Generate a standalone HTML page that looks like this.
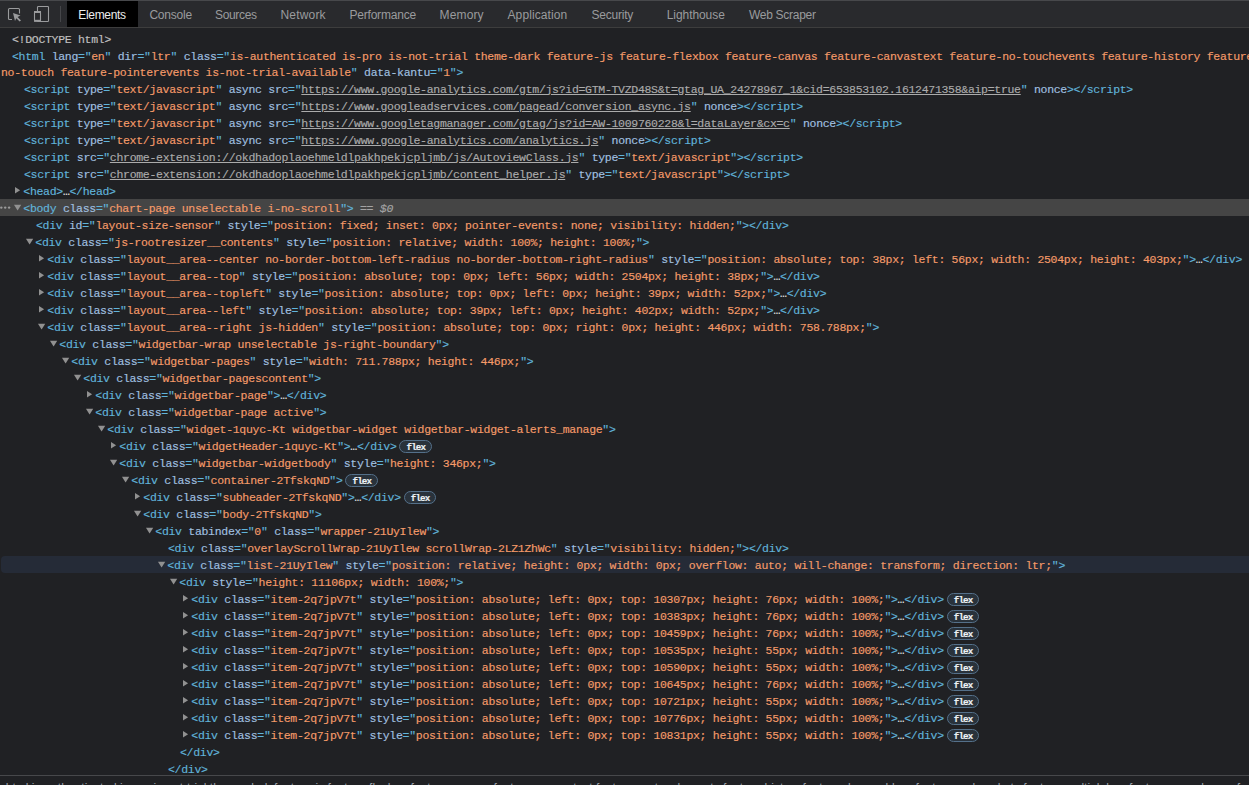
<!DOCTYPE html>
<html lang="en"><head><meta charset="utf-8"><title>DevTools</title>
<style>
html,body{margin:0;padding:0;background:#202124;}
body{width:1249px;height:785px;overflow:hidden;position:relative;font-family:"Liberation Sans",sans-serif;}
#tb{position:absolute;left:0;top:0;width:1249px;height:28px;background:#292a2d;box-sizing:border-box;border-top:1px solid #47484b;border-bottom:1px solid #3d3d3d;}
#tb .sel{position:absolute;left:67px;top:0;width:71px;height:26px;background:#000;}
#tb .tab{position:absolute;top:1px;height:26px;line-height:27px;font-size:12px;color:#9a9b9d;white-space:nowrap;}
#tb .tab.on{color:#eceded;}
#tb .div{position:absolute;left:60px;top:5px;width:1px;height:16px;background:#454649;}
#tb svg{position:absolute;left:0;top:0;}
#tree{position:absolute;left:0;top:28px;width:1249px;height:747px;overflow:hidden;font-family:"Liberation Mono","DejaVu Sans Mono",monospace;font-size:11.5px;letter-spacing:-0.301px;color:#d5d5d5;-webkit-text-stroke:0.15px;}
.row{position:absolute;left:0;height:16px;line-height:16px;white-space:pre;}
.row.wrap{white-space:pre;}
.bg{position:absolute;left:0;width:1249px;height:17px;}
.bg.sel{background:#454545;}
.bg.hov{background:#252b37;left:1px;border-radius:4px 0 0 4px;}
.t{color:#61b4db}.n{color:#a1c0e0}.v{color:#f59b69}.l{color:#ababab;text-decoration:underline;text-underline-offset:1px}.g{color:#c0c0c0}.e{color:#e6e6e6}
.eq{color:#a3a3a3;font-style:italic}
.fx{display:inline-block;font-family:"Liberation Mono",monospace;font-size:9.2px;font-weight:bold;letter-spacing:-0.85px;line-height:12px;height:11px;padding:0 6.2px 0 5.7px;margin-left:2.9px;border:1px solid #54708a;border-radius:7px;background:#29323b;color:#eef2f6;vertical-align:0px;position:relative;top:-1px}
.fx b{position:relative;top:1px;left:0.4px}
.ar{position:absolute;}
#cr{position:absolute;left:0;top:775px;width:1249px;height:10px;border-top:1px solid #47484b;box-sizing:border-box;background:#202124;overflow:hidden;}
#cr div{position:absolute;left:5.7px;letter-spacing:0.017px;top:4.4px;white-space:nowrap;font-size:12px;line-height:16px;color:#9aa0a8;}
</style></head><body>
<div id="tb"><div class="sel"></div><svg width="66" height="27" viewBox="0 0 66 27">
<path d="M19.5 12.5 V8.5 Q19.5 7.5 18.5 7.5 H9.5 Q8.5 7.5 8.5 8.5 V17.5 Q8.5 18.5 9.5 18.5 H12" fill="none" stroke="#9a9b9d" stroke-width="1.1"/>
<path d="M13 12 L20.5 14.6 L17.6 15.9 L21 19.4 L19.6 20.6 L16.3 17.2 L15 20 Z" fill="#9a9b9d"/>
<rect x="37.5" y="5.5" width="11" height="15" rx="0.8" fill="none" stroke="#9a9b9d" stroke-width="1.1"/>
<rect x="34.5" y="10.5" width="6" height="9.5" rx="0.8" fill="#292a2d" stroke="#9a9b9d" stroke-width="1.1"/>
<rect x="34" y="10" width="7" height="2" fill="#9a9b9d"/><rect x="34" y="18.8" width="7" height="2" fill="#9a9b9d"/>
</svg><div class="div"></div><div class="tab on" style="left:78.3px;letter-spacing:-0.316px">Elements</div><div class="tab" style="left:149.4px;letter-spacing:-0.204px">Console</div><div class="tab" style="left:215.1px;letter-spacing:-0.362px">Sources</div><div class="tab" style="left:280.5px;letter-spacing:0.183px">Network</div><div class="tab" style="left:349.4px;letter-spacing:-0.191px">Performance</div><div class="tab" style="left:439.6px;letter-spacing:0.126px">Memory</div><div class="tab" style="left:507.5px;letter-spacing:0.107px">Application</div><div class="tab" style="left:591.4px;letter-spacing:-0.207px">Security</div><div class="tab" style="left:666.7px;letter-spacing:-0.062px">Lighthouse</div><div class="tab" style="left:749.0px;letter-spacing:-0.292px">Web Scraper</div></div>
<div id="tree">
<div class="row" style="left:12.0px;top:3.5px"><span class="g">&lt;!DOCTYPE html&gt;</span></div>
<div class="row" style="left:12.0px;top:20.5px"><span class="t">&lt;html</span> <span class="n">lang</span><span class="t">="</span><span class="v">en</span><span class="t">"</span> <span class="n">dir</span><span class="t">="</span><span class="v">ltr</span><span class="t">"</span> <span class="n">class</span><span class="t">="</span><span class="v">is-authenticated is-pro is-not-trial theme-dark feature-js feature-flexbox feature-canvas feature-canvastext feature-no-touchevents feature-history feature-</span></div><div class="row" style="left:1.0px;top:36.5px"><span class="v">no-touch feature-pointerevents is-not-trial-available</span><span class="t">"</span> <span class="n">data-kantu</span><span class="t">="</span><span class="v">1</span><span class="t">"</span><span class="t">&gt;</span></div>
<div class="row" style="left:24.0px;top:53.5px"><span class="t">&lt;script</span> <span class="n">type</span><span class="t">="</span><span class="v">text/javascript</span><span class="t">"</span> <span class="n">async</span> <span class="n">src</span><span class="t">="</span><span class="l">https://www.google-analytics.com/gtm/js?id=GTM-TVZD48S&amp;t=gtag_UA_24278967_1&amp;cid=653853102.1612471358&amp;aip=true</span><span class="t">"</span> <span class="n">nonce</span><span class="t">&gt;</span><span class="t">&lt;/script&gt;</span></div>
<div class="row" style="left:24.0px;top:70.5px"><span class="t">&lt;script</span> <span class="n">type</span><span class="t">="</span><span class="v">text/javascript</span><span class="t">"</span> <span class="n">async</span> <span class="n">src</span><span class="t">="</span><span class="l">https://www.googleadservices.com/pagead/conversion_async.js</span><span class="t">"</span> <span class="n">nonce</span><span class="t">&gt;</span><span class="t">&lt;/script&gt;</span></div>
<div class="row" style="left:24.0px;top:87.5px"><span class="t">&lt;script</span> <span class="n">type</span><span class="t">="</span><span class="v">text/javascript</span><span class="t">"</span> <span class="n">async</span> <span class="n">src</span><span class="t">="</span><span class="l">https://www.googletagmanager.com/gtag/js?id=AW-1009760228&amp;l=dataLayer&amp;cx=c</span><span class="t">"</span> <span class="n">nonce</span><span class="t">&gt;</span><span class="t">&lt;/script&gt;</span></div>
<div class="row" style="left:24.0px;top:104.5px"><span class="t">&lt;script</span> <span class="n">type</span><span class="t">="</span><span class="v">text/javascript</span><span class="t">"</span> <span class="n">async</span> <span class="n">src</span><span class="t">="</span><span class="l">https://www.google-analytics.com/analytics.js</span><span class="t">"</span> <span class="n">nonce</span><span class="t">&gt;</span><span class="t">&lt;/script&gt;</span></div>
<div class="row" style="left:24.0px;top:121.5px"><span class="t">&lt;script</span> <span class="n">src</span><span class="t">="</span><span class="l">chrome-extension://okdhadoplaoehmeldlpakhpekjcpljmb/js/AutoviewClass.js</span><span class="t">"</span> <span class="n">type</span><span class="t">="</span><span class="v">text/javascript</span><span class="t">"</span><span class="t">&gt;</span><span class="t">&lt;/script&gt;</span></div>
<div class="row" style="left:24.0px;top:138.5px"><span class="t">&lt;script</span> <span class="n">src</span><span class="t">="</span><span class="l">chrome-extension://okdhadoplaoehmeldlpakhpekjcpljmb/content_helper.js</span><span class="t">"</span> <span class="n">type</span><span class="t">="</span><span class="v">text/javascript</span><span class="t">"</span><span class="t">&gt;</span><span class="t">&lt;/script&gt;</span></div>
<svg class="ar" style="left:14.0px;top:154px" width="10" height="17"><path d="M1 5 V11.6 L6.1 8.3 Z" fill="#919191"/></svg><div class="row" style="left:23.3px;top:155.5px"><span class="t">&lt;head&gt;</span><span class="e">…</span><span class="t">&lt;/head&gt;</span></div>
<div class="bg sel" style="top:171px"></div><svg class="ar" style="left:0;top:171px" width="11" height="17"><circle cx="1.3" cy="8.6" r="1.2" fill="#9a9a9a"/><circle cx="5.2" cy="8.6" r="1.2" fill="#9a9a9a"/><circle cx="9.1" cy="8.6" r="1.2" fill="#9a9a9a"/></svg><svg class="ar" style="left:14.0px;top:171px" width="10" height="17"><path d="M0 5.8 H7.2 L3.6 11.6 Z" fill="#919191"/></svg><div class="row" style="left:23.3px;top:172.5px"><span class="t">&lt;body</span> <span class="n">class</span><span class="t">="</span><span class="v">chart-page unselectable i-no-scroll</span><span class="t">"</span><span class="t">&gt;</span><span class="eq"> == $0</span></div>
<div class="row" style="left:36.0px;top:189.5px"><span class="t">&lt;div</span> <span class="n">id</span><span class="t">="</span><span class="v">layout-size-sensor</span><span class="t">"</span> <span class="n">style</span><span class="t">="</span><span class="v">position: fixed; inset: 0px; pointer-events: none; visibility: hidden;</span><span class="t">"</span><span class="t">&gt;</span><span class="t">&lt;/div&gt;</span></div>
<svg class="ar" style="left:26.0px;top:205px" width="10" height="17"><path d="M0 5.8 H7.2 L3.6 11.6 Z" fill="#919191"/></svg><div class="row" style="left:35.3px;top:206.5px"><span class="t">&lt;div</span> <span class="n">class</span><span class="t">="</span><span class="v">js-rootresizer__contents</span><span class="t">"</span> <span class="n">style</span><span class="t">="</span><span class="v">position: relative; width: 100%; height: 100%;</span><span class="t">"</span><span class="t">&gt;</span></div>
<svg class="ar" style="left:38.0px;top:222px" width="10" height="17"><path d="M1 5 V11.6 L6.1 8.3 Z" fill="#919191"/></svg><div class="row" style="left:47.3px;top:223.5px"><span class="t">&lt;div</span> <span class="n">class</span><span class="t">="</span><span class="v">layout__area--center no-border-bottom-left-radius no-border-bottom-right-radius</span><span class="t">"</span> <span class="n">style</span><span class="t">="</span><span class="v">position: absolute; top: 38px; left: 56px; width: 2504px; height: 403px;</span><span class="t">"</span><span class="t">&gt;</span><span class="e">…</span><span class="t">&lt;/div&gt;</span></div>
<svg class="ar" style="left:38.0px;top:239px" width="10" height="17"><path d="M1 5 V11.6 L6.1 8.3 Z" fill="#919191"/></svg><div class="row" style="left:47.3px;top:240.5px"><span class="t">&lt;div</span> <span class="n">class</span><span class="t">="</span><span class="v">layout__area--top</span><span class="t">"</span> <span class="n">style</span><span class="t">="</span><span class="v">position: absolute; top: 0px; left: 56px; width: 2504px; height: 38px;</span><span class="t">"</span><span class="t">&gt;</span><span class="e">…</span><span class="t">&lt;/div&gt;</span></div>
<svg class="ar" style="left:38.0px;top:256px" width="10" height="17"><path d="M1 5 V11.6 L6.1 8.3 Z" fill="#919191"/></svg><div class="row" style="left:47.3px;top:257.5px"><span class="t">&lt;div</span> <span class="n">class</span><span class="t">="</span><span class="v">layout__area--topleft</span><span class="t">"</span> <span class="n">style</span><span class="t">="</span><span class="v">position: absolute; top: 0px; left: 0px; height: 39px; width: 52px;</span><span class="t">"</span><span class="t">&gt;</span><span class="e">…</span><span class="t">&lt;/div&gt;</span></div>
<svg class="ar" style="left:38.0px;top:273px" width="10" height="17"><path d="M1 5 V11.6 L6.1 8.3 Z" fill="#919191"/></svg><div class="row" style="left:47.3px;top:274.5px"><span class="t">&lt;div</span> <span class="n">class</span><span class="t">="</span><span class="v">layout__area--left</span><span class="t">"</span> <span class="n">style</span><span class="t">="</span><span class="v">position: absolute; top: 39px; left: 0px; height: 402px; width: 52px;</span><span class="t">"</span><span class="t">&gt;</span><span class="e">…</span><span class="t">&lt;/div&gt;</span></div>
<svg class="ar" style="left:38.0px;top:290px" width="10" height="17"><path d="M0 5.8 H7.2 L3.6 11.6 Z" fill="#919191"/></svg><div class="row" style="left:47.3px;top:291.5px"><span class="t">&lt;div</span> <span class="n">class</span><span class="t">="</span><span class="v">layout__area--right js-hidden</span><span class="t">"</span> <span class="n">style</span><span class="t">="</span><span class="v">position: absolute; top: 0px; right: 0px; height: 446px; width: 758.788px;</span><span class="t">"</span><span class="t">&gt;</span></div>
<svg class="ar" style="left:50.0px;top:307px" width="10" height="17"><path d="M0 5.8 H7.2 L3.6 11.6 Z" fill="#919191"/></svg><div class="row" style="left:59.3px;top:308.5px"><span class="t">&lt;div</span> <span class="n">class</span><span class="t">="</span><span class="v">widgetbar-wrap unselectable js-right-boundary</span><span class="t">"</span><span class="t">&gt;</span></div>
<svg class="ar" style="left:62.0px;top:324px" width="10" height="17"><path d="M0 5.8 H7.2 L3.6 11.6 Z" fill="#919191"/></svg><div class="row" style="left:71.3px;top:325.5px"><span class="t">&lt;div</span> <span class="n">class</span><span class="t">="</span><span class="v">widgetbar-pages</span><span class="t">"</span> <span class="n">style</span><span class="t">="</span><span class="v">width: 711.788px; height: 446px;</span><span class="t">"</span><span class="t">&gt;</span></div>
<svg class="ar" style="left:74.0px;top:341px" width="10" height="17"><path d="M0 5.8 H7.2 L3.6 11.6 Z" fill="#919191"/></svg><div class="row" style="left:83.3px;top:342.5px"><span class="t">&lt;div</span> <span class="n">class</span><span class="t">="</span><span class="v">widgetbar-pagescontent</span><span class="t">"</span><span class="t">&gt;</span></div>
<svg class="ar" style="left:86.0px;top:358px" width="10" height="17"><path d="M1 5 V11.6 L6.1 8.3 Z" fill="#919191"/></svg><div class="row" style="left:95.3px;top:359.5px"><span class="t">&lt;div</span> <span class="n">class</span><span class="t">="</span><span class="v">widgetbar-page</span><span class="t">"</span><span class="t">&gt;</span><span class="e">…</span><span class="t">&lt;/div&gt;</span></div>
<svg class="ar" style="left:86.0px;top:375px" width="10" height="17"><path d="M0 5.8 H7.2 L3.6 11.6 Z" fill="#919191"/></svg><div class="row" style="left:95.3px;top:376.5px"><span class="t">&lt;div</span> <span class="n">class</span><span class="t">="</span><span class="v">widgetbar-page active</span><span class="t">"</span><span class="t">&gt;</span></div>
<svg class="ar" style="left:98.0px;top:392px" width="10" height="17"><path d="M0 5.8 H7.2 L3.6 11.6 Z" fill="#919191"/></svg><div class="row" style="left:107.3px;top:393.5px"><span class="t">&lt;div</span> <span class="n">class</span><span class="t">="</span><span class="v">widget-1quyc-Kt widgetbar-widget widgetbar-widget-alerts_manage</span><span class="t">"</span><span class="t">&gt;</span></div>
<svg class="ar" style="left:110.0px;top:409px" width="10" height="17"><path d="M1 5 V11.6 L6.1 8.3 Z" fill="#919191"/></svg><div class="row" style="left:119.3px;top:410.5px"><span class="t">&lt;div</span> <span class="n">class</span><span class="t">="</span><span class="v">widgetHeader-1quyc-Kt</span><span class="t">"</span><span class="t">&gt;</span><span class="e">…</span><span class="t">&lt;/div&gt;</span><span class="fx"><b>flex</b></span></div>
<svg class="ar" style="left:110.0px;top:426px" width="10" height="17"><path d="M0 5.8 H7.2 L3.6 11.6 Z" fill="#919191"/></svg><div class="row" style="left:119.3px;top:427.5px"><span class="t">&lt;div</span> <span class="n">class</span><span class="t">="</span><span class="v">widgetbar-widgetbody</span><span class="t">"</span> <span class="n">style</span><span class="t">="</span><span class="v">height: 346px;</span><span class="t">"</span><span class="t">&gt;</span></div>
<svg class="ar" style="left:122.0px;top:443px" width="10" height="17"><path d="M0 5.8 H7.2 L3.6 11.6 Z" fill="#919191"/></svg><div class="row" style="left:131.3px;top:444.5px"><span class="t">&lt;div</span> <span class="n">class</span><span class="t">="</span><span class="v">container-2TfskqND</span><span class="t">"</span><span class="t">&gt;</span><span class="fx"><b>flex</b></span></div>
<svg class="ar" style="left:134.0px;top:460px" width="10" height="17"><path d="M1 5 V11.6 L6.1 8.3 Z" fill="#919191"/></svg><div class="row" style="left:143.3px;top:461.5px"><span class="t">&lt;div</span> <span class="n">class</span><span class="t">="</span><span class="v">subheader-2TfskqND</span><span class="t">"</span><span class="t">&gt;</span><span class="e">…</span><span class="t">&lt;/div&gt;</span><span class="fx"><b>flex</b></span></div>
<svg class="ar" style="left:134.0px;top:477px" width="10" height="17"><path d="M0 5.8 H7.2 L3.6 11.6 Z" fill="#919191"/></svg><div class="row" style="left:143.3px;top:478.5px"><span class="t">&lt;div</span> <span class="n">class</span><span class="t">="</span><span class="v">body-2TfskqND</span><span class="t">"</span><span class="t">&gt;</span></div>
<svg class="ar" style="left:146.0px;top:494px" width="10" height="17"><path d="M0 5.8 H7.2 L3.6 11.6 Z" fill="#919191"/></svg><div class="row" style="left:155.3px;top:495.5px"><span class="t">&lt;div</span> <span class="n">tabindex</span><span class="t">="</span><span class="v">0</span><span class="t">"</span> <span class="n">class</span><span class="t">="</span><span class="v">wrapper-21UyIlew</span><span class="t">"</span><span class="t">&gt;</span></div>
<div class="row" style="left:168.0px;top:512.5px"><span class="t">&lt;div</span> <span class="n">class</span><span class="t">="</span><span class="v">overlayScrollWrap-21UyIlew scrollWrap-2LZ1ZhWc</span><span class="t">"</span> <span class="n">style</span><span class="t">="</span><span class="v">visibility: hidden;</span><span class="t">"</span><span class="t">&gt;</span><span class="t">&lt;/div&gt;</span></div>
<div class="bg hov" style="top:528px"></div><svg class="ar" style="left:158.0px;top:528px" width="10" height="17"><path d="M0 5.8 H7.2 L3.6 11.6 Z" fill="#919191"/></svg><div class="row" style="left:167.3px;top:529.5px"><span class="t">&lt;div</span> <span class="n">class</span><span class="t">="</span><span class="v">list-21UyIlew</span><span class="t">"</span> <span class="n">style</span><span class="t">="</span><span class="v">position: relative; height: 0px; width: 0px; overflow: auto; will-change: transform; direction: ltr;</span><span class="t">"</span><span class="t">&gt;</span></div>
<svg class="ar" style="left:170.0px;top:545px" width="10" height="17"><path d="M0 5.8 H7.2 L3.6 11.6 Z" fill="#919191"/></svg><div class="row" style="left:179.3px;top:546.5px"><span class="t">&lt;div</span> <span class="n">style</span><span class="t">="</span><span class="v">height: 11106px; width: 100%;</span><span class="t">"</span><span class="t">&gt;</span></div>
<svg class="ar" style="left:182.0px;top:562px" width="10" height="17"><path d="M1 5 V11.6 L6.1 8.3 Z" fill="#919191"/></svg><div class="row" style="left:191.3px;top:563.5px"><span class="t">&lt;div</span> <span class="n">class</span><span class="t">="</span><span class="v">item-2q7jpV7t</span><span class="t">"</span> <span class="n">style</span><span class="t">="</span><span class="v">position: absolute; left: 0px; top: 10307px; height: 76px; width: 100%;</span><span class="t">"</span><span class="t">&gt;</span><span class="e">…</span><span class="t">&lt;/div&gt;</span><span class="fx"><b>flex</b></span></div>
<svg class="ar" style="left:182.0px;top:579px" width="10" height="17"><path d="M1 5 V11.6 L6.1 8.3 Z" fill="#919191"/></svg><div class="row" style="left:191.3px;top:580.5px"><span class="t">&lt;div</span> <span class="n">class</span><span class="t">="</span><span class="v">item-2q7jpV7t</span><span class="t">"</span> <span class="n">style</span><span class="t">="</span><span class="v">position: absolute; left: 0px; top: 10383px; height: 76px; width: 100%;</span><span class="t">"</span><span class="t">&gt;</span><span class="e">…</span><span class="t">&lt;/div&gt;</span><span class="fx"><b>flex</b></span></div>
<svg class="ar" style="left:182.0px;top:596px" width="10" height="17"><path d="M1 5 V11.6 L6.1 8.3 Z" fill="#919191"/></svg><div class="row" style="left:191.3px;top:597.5px"><span class="t">&lt;div</span> <span class="n">class</span><span class="t">="</span><span class="v">item-2q7jpV7t</span><span class="t">"</span> <span class="n">style</span><span class="t">="</span><span class="v">position: absolute; left: 0px; top: 10459px; height: 76px; width: 100%;</span><span class="t">"</span><span class="t">&gt;</span><span class="e">…</span><span class="t">&lt;/div&gt;</span><span class="fx"><b>flex</b></span></div>
<svg class="ar" style="left:182.0px;top:613px" width="10" height="17"><path d="M1 5 V11.6 L6.1 8.3 Z" fill="#919191"/></svg><div class="row" style="left:191.3px;top:614.5px"><span class="t">&lt;div</span> <span class="n">class</span><span class="t">="</span><span class="v">item-2q7jpV7t</span><span class="t">"</span> <span class="n">style</span><span class="t">="</span><span class="v">position: absolute; left: 0px; top: 10535px; height: 55px; width: 100%;</span><span class="t">"</span><span class="t">&gt;</span><span class="e">…</span><span class="t">&lt;/div&gt;</span><span class="fx"><b>flex</b></span></div>
<svg class="ar" style="left:182.0px;top:630px" width="10" height="17"><path d="M1 5 V11.6 L6.1 8.3 Z" fill="#919191"/></svg><div class="row" style="left:191.3px;top:631.5px"><span class="t">&lt;div</span> <span class="n">class</span><span class="t">="</span><span class="v">item-2q7jpV7t</span><span class="t">"</span> <span class="n">style</span><span class="t">="</span><span class="v">position: absolute; left: 0px; top: 10590px; height: 55px; width: 100%;</span><span class="t">"</span><span class="t">&gt;</span><span class="e">…</span><span class="t">&lt;/div&gt;</span><span class="fx"><b>flex</b></span></div>
<svg class="ar" style="left:182.0px;top:647px" width="10" height="17"><path d="M1 5 V11.6 L6.1 8.3 Z" fill="#919191"/></svg><div class="row" style="left:191.3px;top:648.5px"><span class="t">&lt;div</span> <span class="n">class</span><span class="t">="</span><span class="v">item-2q7jpV7t</span><span class="t">"</span> <span class="n">style</span><span class="t">="</span><span class="v">position: absolute; left: 0px; top: 10645px; height: 76px; width: 100%;</span><span class="t">"</span><span class="t">&gt;</span><span class="e">…</span><span class="t">&lt;/div&gt;</span><span class="fx"><b>flex</b></span></div>
<svg class="ar" style="left:182.0px;top:664px" width="10" height="17"><path d="M1 5 V11.6 L6.1 8.3 Z" fill="#919191"/></svg><div class="row" style="left:191.3px;top:665.5px"><span class="t">&lt;div</span> <span class="n">class</span><span class="t">="</span><span class="v">item-2q7jpV7t</span><span class="t">"</span> <span class="n">style</span><span class="t">="</span><span class="v">position: absolute; left: 0px; top: 10721px; height: 55px; width: 100%;</span><span class="t">"</span><span class="t">&gt;</span><span class="e">…</span><span class="t">&lt;/div&gt;</span><span class="fx"><b>flex</b></span></div>
<svg class="ar" style="left:182.0px;top:681px" width="10" height="17"><path d="M1 5 V11.6 L6.1 8.3 Z" fill="#919191"/></svg><div class="row" style="left:191.3px;top:682.5px"><span class="t">&lt;div</span> <span class="n">class</span><span class="t">="</span><span class="v">item-2q7jpV7t</span><span class="t">"</span> <span class="n">style</span><span class="t">="</span><span class="v">position: absolute; left: 0px; top: 10776px; height: 55px; width: 100%;</span><span class="t">"</span><span class="t">&gt;</span><span class="e">…</span><span class="t">&lt;/div&gt;</span><span class="fx"><b>flex</b></span></div>
<svg class="ar" style="left:182.0px;top:698px" width="10" height="17"><path d="M1 5 V11.6 L6.1 8.3 Z" fill="#919191"/></svg><div class="row" style="left:191.3px;top:699.5px"><span class="t">&lt;div</span> <span class="n">class</span><span class="t">="</span><span class="v">item-2q7jpV7t</span><span class="t">"</span> <span class="n">style</span><span class="t">="</span><span class="v">position: absolute; left: 0px; top: 10831px; height: 55px; width: 100%;</span><span class="t">"</span><span class="t">&gt;</span><span class="e">…</span><span class="t">&lt;/div&gt;</span><span class="fx"><b>flex</b></span></div>
<div class="row" style="left:180.0px;top:716.5px"><span class="t">&lt;/div&gt;</span></div>
<div class="row" style="left:168.0px;top:733.5px"><span class="t">&lt;/div&gt;</span></div>
</div>
<div id="cr"><div>html.is-authenticated.is-pro.is-not-trial.theme-dark.feature-js.feature-flexbox.feature-canvas.feature-canvastext.feature-no-touchevents.feature-history.feature-draganddrop.feature-websockets.feature-multiplebgs.feature-csscolumns.feature-cssgrid.feature-no-touch.feature-pointerevents.is-not-trial-available</div></div>
</body></html>
